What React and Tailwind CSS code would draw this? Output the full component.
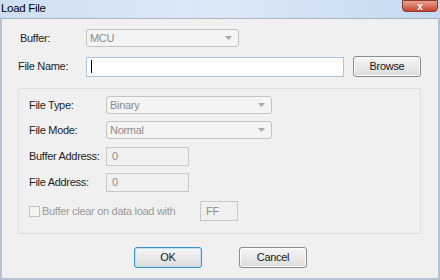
import React from 'react'

function Combo({ value, className = '' }) {
  return (
    <div className={`flex items-center justify-between rounded-[3px] border border-[#c3c3c3] bg-[#f4f4f4] pl-[3px] pr-[6px] text-[#8d8d8d] ${className}`}>
      <span>{value}</span>
      <svg width="7" height="4" viewBox="0 0 7 4"><path d="M0 0h7L3.5 4z" fill="#a9a9a9" /></svg>
    </div>
  )
}

function Field({ value, className = '' }) {
  return (
    <div className={`flex items-center border border-[#c9c9c9] bg-[#f0f0f0] pl-[5px] text-[#8d8d8d] ${className}`}>
      {value}
    </div>
  )
}

function Btn({ children, focused, className = '' }) {
  return (
    <button
      type="button"
      className={`flex items-center justify-center rounded-[3px] border bg-gradient-to-b from-[#f6f6f6] to-[#dcdcdc] text-[#1a1a1a] ${
        focused ? 'border-[#3c8fc7] shadow-[inset_0_0_0_1px_#bfe3f7]' : 'border-[#8a8a8a] shadow-[inset_0_0_0_1px_#fbfbfb]'
      } ${className}`}
    >
      {children}
    </button>
  )
}

export default function App() {
  return (
    <div className="h-[280px] w-[440px] overflow-hidden bg-[#f0f0f0] text-[11px] tracking-[-0.3px] text-[#1e1e1e]" style={{ fontFamily: '"Liberation Sans", Arial, sans-serif' }}>
      {/* title bar */}
      <div className="relative flex h-[18px] items-center bg-gradient-to-r from-[#cfe0f2] via-[#dbe8f6] to-[#c4d9ef] pl-[1px] text-[11.5px] text-black">
        Load File
        <div className="absolute right-[2px] top-0 flex h-[12px] w-[36px] items-center justify-center rounded-b-[4px] border border-[#8d3a2e] bg-gradient-to-b from-[#e8a08e] to-[#c6422b] text-[10px] font-bold text-white">
          x
        </div>
      </div>

      <div className="h-[262px] border-x-2 border-b-2 border-t border-x-[#b4c3d4] border-b-[#b4c3d4] border-t-[#a9b4bf] pl-[16px] pr-[17px] pt-[10px]">
        <div className="flex items-center">
          <span className="w-[68px] pl-[2px]">Buffer:</span>
          <Combo value="MCU" className="h-[18px] w-[153px]" />
        </div>

        <div className="mt-[9px] flex items-center">
          <span className="w-[68px]">File Name:</span>
          <div className="flex h-[20px] w-[258px] items-center border border-[#a8c6e0] bg-white pl-[4px]">
            <div className="h-[13px] w-px bg-black" />
          </div>
          <Btn className="ml-[9px] h-[21px] w-[68px]">Browse</Btn>
        </div>

        <div className="mt-[11px] h-[146px] w-[403px] rounded-[2px] border border-[#dcdfe3] pl-[10px] pt-[7px]">
          <div className="flex items-center">
            <span className="w-[77px]">File Type:</span>
            <Combo value="Binary" className="h-[18px] w-[166px]" />
          </div>
          <div className="mt-[7px] flex items-center">
            <span className="w-[77px]">File Mode:</span>
            <Combo value="Normal" className="h-[18px] w-[166px]" />
          </div>
          <div className="mt-[8px] flex items-center">
            <span className="w-[77px]">Buffer Address:</span>
            <Field value="0" className="h-[19px] w-[83px]" />
          </div>
          <div className="mt-[7px] flex items-center">
            <span className="w-[77px]">File Address:</span>
            <Field value="0" className="h-[19px] w-[83px]" />
          </div>
          <div className="mt-[9px] flex items-center">
            <div className="mr-[2px] h-[11px] w-[11px] border border-[#c2c2c2] bg-[#f4f4f4]" />
            <span className="w-[158px] text-[#9a9a9a]">Buffer clear on data load with</span>
            <Field value="FF" className="h-[20px] w-[38px]" />
          </div>
        </div>

        <div className="mt-[13px] flex pl-[116px]">
          <Btn focused className="h-[21px] w-[68px]">OK</Btn>
          <Btn className="ml-[37px] h-[21px] w-[68px]">Cancel</Btn>
        </div>
      </div>
    </div>
  )
}
